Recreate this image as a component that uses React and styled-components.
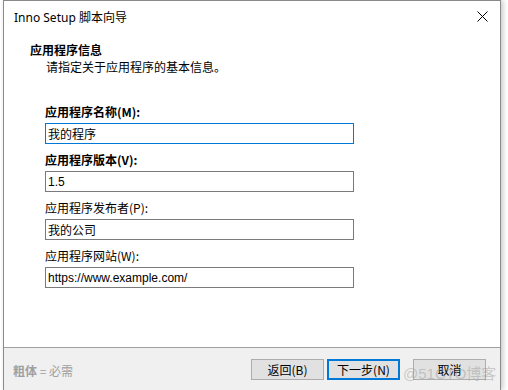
import styled, { createGlobalStyle } from "styled-components";

const GlobalStyle = createGlobalStyle`
    html, body {
        margin: 0;
        padding: 0;
        background: #ffffff;
    }
    body {
        font-family: "Noto Sans", "Noto Sans CJK SC", sans-serif;
        font-size: 12px;
        color: #000000;
    }
`;

const Window = styled.div`
    position: relative;
    margin-left: 3px;
    width: 496px;
    height: 389px;
    border: 1px solid #8a8a8a;
    border-bottom: none;
    background: #ffffff;
    box-shadow: 2px 0 5px rgba(0, 0, 0, 0.22);
    display: flex;
    flex-direction: column;
`;

const TitleBar = styled.div`
    height: 31px;
    display: flex;
    align-items: center;
    justify-content: space-between;
    padding: 0 12px 0 10px;
    font-family: "Noto Sans", "Noto Sans CJK SC", sans-serif;
    font-size: 12px;
`;

const CloseButton = styled.div`
    width: 12px;
    height: 12px;
    display: flex;
    align-items: center;
    justify-content: center;
`;

const Body = styled.div`
    flex: 1;
    display: flex;
    flex-direction: column;
`;

const Header = styled.div`
    margin-top: 10px;
    padding-left: 26px;
    display: flex;
    flex-direction: column;
`;

const HeaderTitle = styled.div`
    font-family: "Noto Sans CJK SC", sans-serif;
    font-weight: 700;
    font-size: 12px;
    line-height: 16px;
`;

const HeaderSub = styled.div`
    font-family: "Noto Sans CJK SC", sans-serif;
    font-size: 12px;
    line-height: 16px;
    margin-top: 1px;
    padding-left: 16px;
`;

const Form = styled.div`
    margin-top: 29px;
    padding-left: 41px;
    display: flex;
    flex-direction: column;
    gap: 8px;
`;

const Field = styled.div`
    display: flex;
    flex-direction: column;
    gap: 3px;
`;

const Label = styled.div`
    font-family: "Noto Sans CJK SC", sans-serif;
    font-size: 12px;
    line-height: 16px;
    font-weight: ${(p) => (p.$bold ? 700 : 400)};
`;

const Input = styled.div`
    box-sizing: border-box;
    width: 309px;
    height: 21px;
    border: 1px solid ${(p) => (p.$focused ? "#0078d7" : "#7a7a7a")};
    padding-left: 2px;
    display: flex;
    align-items: center;
    font-family: ${(p) => (p.$cjk ? '"Noto Sans CJK SC", sans-serif' : '"Liberation Sans", sans-serif')};
    font-size: 12px;
`;

const Footer = styled.div`
    height: 43px;
    border-top: 1px solid #a0a0a0;
    background: #f0f0f0;
    display: flex;
    align-items: center;
    padding: 0 14px 0 9px;
    box-sizing: border-box;
`;

const Hint = styled.div`
    flex: 1;
    color: #a0a0a0;
    font-family: "Noto Sans CJK SC", sans-serif;
    font-size: 12px;
    padding-top: 3px;
    b {
        font-weight: 700;
    }
`;

const Buttons = styled.div`
    display: flex;
    gap: 3px;
`;

const Button = styled.div`
    box-sizing: border-box;
    width: 73px;
    height: 21px;
    background: #e1e1e1;
    border: ${(p) => (p.$default ? "2px solid #0078d7" : "1px solid #adadad")};
    display: flex;
    align-items: center;
    justify-content: center;
    font-family: "Noto Sans CJK SC", sans-serif;
    font-size: 12px;
    margin-left: ${(p) => (p.$gapLeft ? "10px" : "0")};
`;

const Watermark = styled.div`
    position: absolute;
    left: 399px;
    top: 361px;
    font-family: "Liberation Sans", "Noto Sans CJK SC", sans-serif;
    font-size: 15px;
    color: rgba(150, 150, 150, 0.45);
    pointer-events: none;
    white-space: nowrap;
`;

const fields = [
    { label: "应用程序名称(M):", value: "我的程序", bold: true, focused: true, cjk: true },
    { label: "应用程序版本(V):", value: "1.5", bold: true },
    { label: "应用程序发布者(P):", value: "我的公司", cjk: true },
    { label: "应用程序网站(W):", value: "https://www.example.com/" },
];

export default function App() {
    return (
        <>
            <GlobalStyle />
            <Window>
                <TitleBar>
                    <span>Inno Setup 脚本向导</span>
                    <CloseButton>
                        <svg width="11" height="11" viewBox="0 0 11 11">
                            <path d="M0.5 0.5 L10.5 10.5 M10.5 0.5 L0.5 10.5" stroke="#000" strokeWidth="1" />
                        </svg>
                    </CloseButton>
                </TitleBar>
                <Body>
                    <Header>
                        <HeaderTitle>应用程序信息</HeaderTitle>
                        <HeaderSub>请指定关于应用程序的基本信息。</HeaderSub>
                    </Header>
                    <Form>
                        {fields.map((f) => (
                            <Field key={f.label}>
                                <Label $bold={f.bold}>{f.label}</Label>
                                <Input $focused={f.focused} $cjk={f.cjk}>{f.value}</Input>
                            </Field>
                        ))}
                    </Form>
                </Body>
                <Footer>
                    <Hint><b>粗体</b> = 必需</Hint>
                    <Buttons>
                        <Button>返回(B)</Button>
                        <Button $default>下一步(N)</Button>
                        <Button $gapLeft>取消</Button>
                    </Buttons>
                </Footer>
                <Watermark>@51CTO博客</Watermark>
            </Window>
        </>
    );
}
